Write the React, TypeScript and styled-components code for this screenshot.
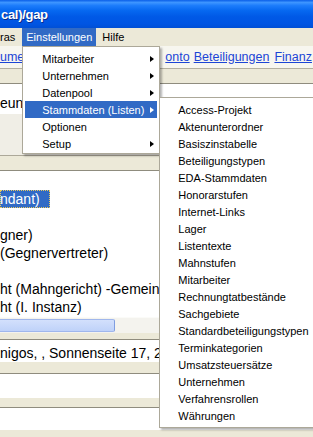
import React from "react";
import styled, { createGlobalStyle } from "styled-components";

const GlobalStyle = createGlobalStyle`
  html, body {
    margin: 0;
    padding: 0;
    background: #ece9d8;
  }
  body {
    width: 313px;
    height: 437px;
    overflow: hidden;
    font-family: "Liberation Sans", Arial, sans-serif;
  }
`;

const Window = styled.div`
  position: relative;
  width: 313px;
  height: 437px;
  overflow: hidden;
  display: flex;
  flex-direction: column;
  background: #ece9d8;
`;

const TitleBar = styled.div`
  flex: none;
  height: 28px;
  display: flex;
  align-items: center;
  padding-left: 1px;
  background: linear-gradient(
    180deg,
    #0a5fe8 0%,
    #3d95ff 9%,
    #1c7cfb 20%,
    #0668f0 38%,
    #0059e6 60%,
    #0055e3 85%,
    #004fd6 100%
  );
  color: #fff;
  font-weight: bold;
  font-size: 13px;
  letter-spacing: -0.3px;
  text-shadow: 1px 1px 0 #0a2d8c;
`;

const MenuBar = styled.div`
  position: relative;
  z-index: 5;
  flex: none;
  height: 18px;
  display: flex;
  align-items: stretch;
  background: #ece9d8;
  font-size: 11px;
`;

const BarItem = styled.div<{ $active?: boolean; $pl?: number; $pr?: number }>`
  position: relative;
  display: flex;
  align-items: center;
  padding: 0 ${(p) => p.$pr ?? 6}px 0 ${(p) => p.$pl ?? 6}px;
  background: ${(p) => (p.$active ? "#316ac5" : "transparent")};
  color: ${(p) => (p.$active ? "#fff" : "#000")};
  white-space: nowrap;
`;

const Dropdown = styled.div`
  position: absolute;
  top: 100%;
  left: 0;
  box-sizing: border-box;
  width: 138px;
  padding: 3px 2px 1px;
  background: #fff;
  border: 1px solid #aca899;
  box-shadow: 2px 2px 2px rgba(0, 0, 0, 0.3);
  color: #000;
  font-size: 11px;
`;

const Submenu = styled.div`
  position: absolute;
  left: calc(100% + 2px);
  top: -4px;
  box-sizing: border-box;
  width: 176px;
  padding: 3px 2px;
  background: #fff;
  border: 1px solid #aca899;
  box-shadow: 2px 2px 2px rgba(0, 0, 0, 0.3);
  color: #000;
`;

const MenuRow = styled.div<{ $active?: boolean; $indent?: number }>`
  position: relative;
  height: 17px;
  display: flex;
  align-items: center;
  justify-content: space-between;
  padding: 0 3px 0 ${(p) => p.$indent ?? 17}px;
  background: ${(p) => (p.$active ? "#316ac5" : "transparent")};
  color: ${(p) => (p.$active ? "#fff" : "#000")};
  white-space: nowrap;
`;

const Arrow = styled.span<{ $light?: boolean }>`
  width: 0;
  height: 0;
  border-top: 3.5px solid transparent;
  border-bottom: 3.5px solid transparent;
  border-left: 4px solid ${(p) => (p.$light ? "#fff" : "#000")};
`;

const LinkBar = styled.div`
  flex: none;
  height: 22px;
  display: flex;
  align-items: center;
  background: #f7f6ef;
  border-bottom: 1px solid #b3b0a1;
  font-size: 12.5px;
`;

const Link = styled.span<{ $ml?: number }>`
  margin-left: ${(p) => p.$ml ?? 0}px;
  color: #1c45d6;
  text-decoration: underline;
  white-space: nowrap;
`;

const Band = styled.div<{ $h: number; $top?: boolean; $bottom?: boolean }>`
  flex: none;
  height: ${(p) => p.$h}px;
  background: #ece9d8;
  border-top: ${(p) => (p.$top ? "1px solid #aca899" : "none")};
  border-bottom: ${(p) => (p.$bottom ? "1px solid #8f8c7e" : "none")};
`;

const Pane = styled.div`
  flex: none;
  height: 41px;
  background: #f0eee6;
`;

const Field = styled.div<{ $h: number; $pt: number }>`
  flex: none;
  box-sizing: border-box;
  height: ${(p) => p.$h}px;
  padding-top: ${(p) => p.$pt}px;
  background: #fff;
  font-size: 14px;
  line-height: 16px;
  white-space: nowrap;
  overflow: hidden;
`;

const List = styled.div`
  flex: none;
  padding: 1px 0;
  background: #fff;
  font-size: 14px;
`;

const ListRow = styled.div`
  height: 18px;
  line-height: 18px;
  white-space: nowrap;
  overflow: hidden;
`;

const Selected = styled.span`
  display: inline-block;
  box-sizing: border-box;
  height: 18px;
  padding-right: 10px;
  background: #316ac5;
  color: #fff;
  outline: 1px dotted #e8c860;
  outline-offset: -1px;
`;

const HScroll = styled.div`
  flex: none;
  box-sizing: border-box;
  height: 16px;
  padding: 1px 0;
  display: flex;
  background: #f4f3ee;
  border-top: 1px solid #fbfbf8;
`;

const Thumb = styled.div`
  width: 117px;
  margin-left: -2px;
  box-sizing: border-box;
  background: linear-gradient(180deg, #d3e0fc, #bfd2f9);
  border: 1px solid #a0b7ec;
  border-right-color: #7f9de0;
  border-radius: 2px;
`;

const stammdaten = [
  "Access-Projekt",
  "Aktenunterordner",
  "Basiszinstabelle",
  "Beteiligungstypen",
  "EDA-Stammdaten",
  "Honorarstufen",
  "Internet-Links",
  "Lager",
  "Listentexte",
  "Mahnstufen",
  "Mitarbeiter",
  "Rechnungtatbestände",
  "Sachgebiete",
  "Standardbeteiligungstypen",
  "Terminkategorien",
  "Umsatzsteuersätze",
  "Unternehmen",
  "Verfahrensrollen",
  "Währungen",
];

const rows: { text: string; selected?: boolean }[] = [
  { text: "" },
  { text: "ndant)", selected: true },
  { text: "" },
  { text: "gner)" },
  { text: "(Gegnervertreter)" },
  { text: "" },
  { text: "ht (Mahngericht) -Gemeinde" },
  { text: "ht (I. Instanz)" },
];

function App() {
  return (
    <Window>
      <GlobalStyle />
      <TitleBar>cal)/gap</TitleBar>
      <MenuBar>
        <BarItem $pl={0} $pr={7}>
          ras
        </BarItem>
        <BarItem $active $pl={4} $pr={4}>
          Einstellungen
          <Dropdown>
            <MenuRow>
              Mitarbeiter
              <Arrow />
            </MenuRow>
            <MenuRow>
              Unternehmen
              <Arrow />
            </MenuRow>
            <MenuRow>
              Datenpool
              <Arrow />
            </MenuRow>
            <MenuRow $active>
              Stammdaten (Listen)
              <Arrow $light />
              <Submenu>
                {stammdaten.map((item) => (
                  <MenuRow key={item} $indent={16}>
                    {item}
                  </MenuRow>
                ))}
              </Submenu>
            </MenuRow>
            <MenuRow>Optionen</MenuRow>
            <MenuRow>
              Setup
              <Arrow />
            </MenuRow>
          </Dropdown>
        </BarItem>
        <BarItem>Hilfe</BarItem>
      </MenuBar>
      <LinkBar>
        <Link>ume</Link>
        <Link $ml={141}>onto</Link>
        <Link $ml={4}>Beteiligungen</Link>
        <Link $ml={5}>Finanz</Link>
      </LinkBar>
      <Band $h={14} $bottom />
      <Field $h={30} $pt={11}>
        eun
      </Field>
      <Pane />
      <Band $h={14} $top $bottom />
      <List>
        {rows.map((r, i) => (
          <ListRow key={i}>
            {r.selected ? <Selected>{r.text}</Selected> : r.text}
          </ListRow>
        ))}
      </List>
      <HScroll>
        <Thumb />
      </HScroll>
      <Band $h={6} $bottom />
      <Field $h={22} $pt={5}>
        nigos, , Sonnenseite 17, 2
      </Field>
      <Band $h={11} $bottom />
      <Field $h={24} $pt={4} />
      <Band $h={9} $bottom />
      <Field $h={22} $pt={4} />
      <Band $h={10} />
    </Window>
  );
}

export default App;
